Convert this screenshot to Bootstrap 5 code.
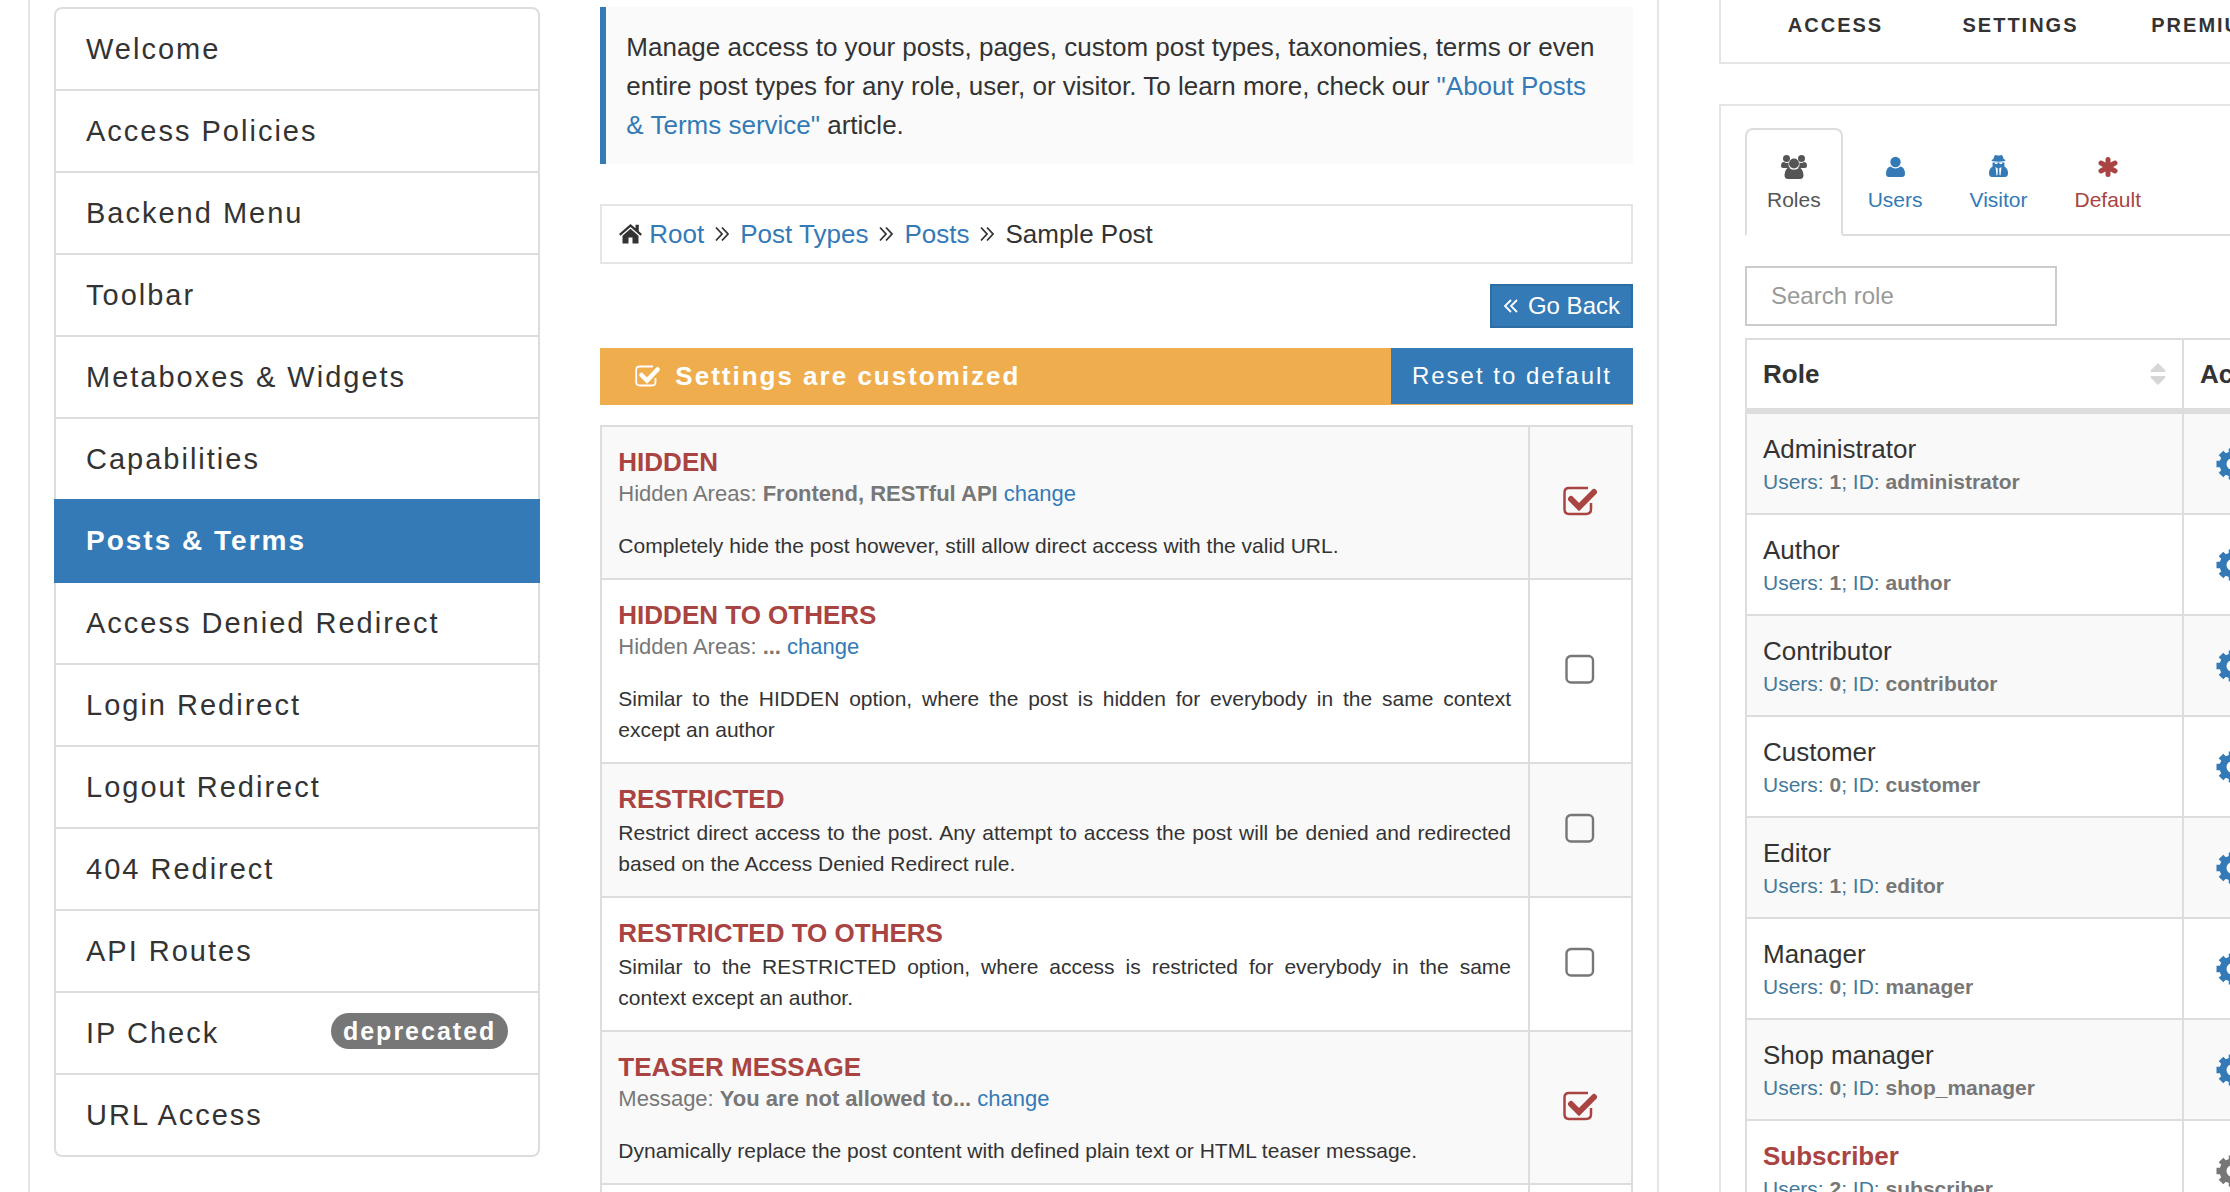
<!DOCTYPE html>
<html lang="en">
<head>
<meta charset="utf-8">
<meta name="viewport" content="width=device-width, initial-scale=1">
<title>Access Manager</title>
<link href="https://cdn.jsdelivr.net/npm/bootstrap@5.3.0/dist/css/bootstrap.min.css" rel="stylesheet">
<style>
body{font-family:"Liberation Sans",Arial,sans-serif;font-size:26px;line-height:36px;color:#333;background:#fff}
a{color:#337ab7;text-decoration:none}
svg{display:block;flex:none}
.page-shell{height:100vh;overflow:hidden;padding-left:28px;gap:60px}
.pane{border:2px solid #e5e5e5;background:#fff}
.main-pane{flex:1 1 0;min-width:0;border-top:0;border-bottom:0;padding:7px 24px 0}
.main-pane>.row{--bs-gutter-x:60px}
.side-wrap{width:511px;overflow:hidden;gap:40px}
.side-wrap>.pane{width:784px}

.feature-list{--bs-list-group-border-width:2px;--bs-list-group-border-color:#ddd;--bs-list-group-border-radius:8px;--bs-list-group-color:#333;--bs-list-group-action-color:#333;--bs-list-group-active-bg:#337ab7;--bs-list-group-active-border-color:#337ab7;--bs-list-group-item-padding-x:30px;--bs-list-group-item-padding-y:20px;font-size:29px;line-height:40px;letter-spacing:2px}
.feature-list .active{font-size:28px;font-weight:700}
.feature-list .badge{font-size:25px;line-height:24px;padding:6px 12px;background:#777;border-radius:18px}

.intro{border-left:6px solid #337ab7;background:#fafafa;padding:21px 32px 19px 20px;line-height:39px;margin:0 0 40px}
.crumbs{border:2px solid #e5e5e5;padding:10px 17px;margin-bottom:20px}
.crumbs .arrows{margin:0 11px}
.crumbs .home-icon{margin-right:7px}
.btn-flat{--bs-btn-color:#fff;--bs-btn-bg:#337ab7;--bs-btn-border-color:#2e6da4;--bs-btn-hover-color:#fff;--bs-btn-hover-bg:#286090;--bs-btn-border-radius:0;--bs-btn-border-width:2px;--bs-btn-font-size:24px;line-height:36px}
.btn-back{padding:2px 11px;gap:10px}
.btn-reset{--bs-btn-border-width:0;padding:10px 21px;letter-spacing:2px}
.notice-bar{background:#f0ad4e;color:#fff;margin:20px 0;padding-bottom:1px;letter-spacing:2px}
.notice-bar .notice-text{padding-left:35px;gap:15px}

.options,.roles{--bs-table-color:#333;--bs-table-striped-color:#333;--bs-table-striped-bg:#f9f9f9;border-color:#ddd;border-collapse:collapse;table-layout:fixed}
.options td,.options th,.roles td,.roles th{border:2px solid #ddd}
.options td{padding:17px 17px 17px 16px}
.options td.pick{width:103px;padding:0 0 8px;text-align:center;vertical-align:middle}
.opt-name{color:#a94442;font-weight:700;line-height:36px;display:block}
.opt-meta{color:#777;font-size:22px;line-height:28px;margin-bottom:22px}
.opt-desc{font-size:21px;line-height:31px;text-align:justify;margin:0}
.tick{appearance:none;display:inline-block;vertical-align:middle;width:34px;height:30px;margin:0;background:no-repeat center url("data:image/svg+xml,%3Csvg xmlns='http://www.w3.org/2000/svg' width='34' height='30'%3E%3Crect x='3.5' y='2' width='26.5' height='26.5' rx='4.5' fill='none' stroke='%23777' stroke-width='2.4'/%3E%3C/svg%3E")}
.tick:checked{background-image:url("data:image/svg+xml,%3Csvg xmlns='http://www.w3.org/2000/svg' width='34' height='30'%3E%3Cpath d='M25 2H6Q1.5 2 1.5 6.500V23Q1.500 28 6 28H23Q28 28 28 23V17' fill='none' stroke='%23a94442' stroke-width='2.5'/%3E%3Cpath d='M8 13L16 21L31 6' fill='none' stroke='%23a94442' stroke-width='6' stroke-linejoin='miter' stroke-linecap='round'/%3E%3C/svg%3E")}

.top-nav{border-top:0!important;padding:0 18px 0 22px;height:64px;flex:none}
.top-nav a{color:#333;font-size:20px;font-weight:700;letter-spacing:2px;line-height:24px;padding:13px 0 25px;text-align:center}
.subject-pane{flex:1 1 auto;padding:22px 24px}
.subject-tabs{--bs-nav-tabs-border-width:2px;--bs-nav-tabs-border-color:#ddd;--bs-nav-tabs-border-radius:8px;--bs-nav-tabs-link-active-color:#555;--bs-nav-tabs-link-active-border-color:#ddd #ddd #fff;--bs-nav-link-color:#337ab7;--bs-nav-link-padding-x:20px;gap:3px;font-size:21px;line-height:30px}
.subject-tabs .nav-link{display:flex;flex-direction:column;align-items:center;gap:5px;padding-top:24px;padding-bottom:19px}
.subject-tabs .nav-link.is-default{color:#a94442}
.search-box{width:312px;height:60px;border:2px solid #ccc;border-radius:0;font-size:24px;padding:0 24px;margin:30px 0 12px;color:#555}
.search-box::placeholder{color:#999}
.roles th{padding:16px;line-height:36px;border-bottom:6px solid #ddd}
.roles td{padding:17px 16px 16px}
.roles .role-col{width:437px}
.role-name{line-height:36px;display:block}
.role-name.current{color:#a94442;font-weight:700}
.role-meta{font-size:21px;line-height:30px;color:#44799b;display:block}
.role-meta b{color:#777}
.roles td.acts{padding:14px 16px 18px 32px;vertical-align:middle}
.acts .gear-btn{--bs-btn-color:#337ab7;--bs-btn-padding-x:0;--bs-btn-padding-y:0;--bs-btn-border-width:0}
.acts .gear-off{--bs-btn-color:#777}
</style>
</head>
<body class="overflow-hidden">
<svg width="0" height="0" class="position-absolute" aria-hidden="true">
  <symbol id="gear" viewBox="0 0 32 32">
    <circle cx="16" cy="16" r="9" fill="none" stroke="currentColor" stroke-width="7"/>
    <g stroke="currentColor" stroke-width="6.500"><path d="M16 .5v7M16 24.500v7M.5 16h7M24.500 16h7M5 5l5 5M22 22l5 5M5 27l5-5M22 10l5-5"/></g>
  </symbol>
</svg>
<div class="page-shell d-flex">
  <main class="pane main-pane">
    <div class="row">
      <div class="col-4">
        <nav class="list-group feature-list" aria-label="Services">
          <a href="#" class="list-group-item list-group-item-action">Welcome</a>
          <a href="#" class="list-group-item list-group-item-action">Access Policies</a>
          <a href="#" class="list-group-item list-group-item-action">Backend Menu</a>
          <a href="#" class="list-group-item list-group-item-action">Toolbar</a>
          <a href="#" class="list-group-item list-group-item-action">Metaboxes &amp; Widgets</a>
          <a href="#" class="list-group-item list-group-item-action">Capabilities</a>
          <a href="#" class="list-group-item list-group-item-action active" aria-current="page">Posts &amp; Terms</a>
          <a href="#" class="list-group-item list-group-item-action">Access Denied Redirect</a>
          <a href="#" class="list-group-item list-group-item-action">Login Redirect</a>
          <a href="#" class="list-group-item list-group-item-action">Logout Redirect</a>
          <a href="#" class="list-group-item list-group-item-action">404 Redirect</a>
          <a href="#" class="list-group-item list-group-item-action">API Routes</a>
          <a href="#" class="list-group-item list-group-item-action d-flex justify-content-between align-items-start">IP Check <span class="badge">deprecated</span></a>
          <a href="#" class="list-group-item list-group-item-action">URL Access</a>
        </nav>
      </div>
      <div class="col-8">
        <p class="intro">Manage access to your posts, pages, custom post types, taxonomies, terms or even entire post types for any role, user, or visitor. To learn more, check our <a href="#">"About Posts &amp; Terms service"</a> article.</p>
        <nav class="crumbs d-flex align-items-center" aria-label="Breadcrumb">
          <svg class="home-icon" width="23" height="20" viewBox="0 0 23 20" fill="#333"><path d="M11.500 0L0 10l1.500 1.700L11.500 3l10 8.700L23 10l-3.200-2.800V.8h-3.300v3.500z"/><path d="M3.500 11.800V19.500H9.500V13.500h4V19.500h6V11.800l-8-7z"/></svg>
          <a href="#">Root</a>
          <svg class="arrows" width="14" height="16" viewBox="0 0 14 16" fill="none" stroke="#333" stroke-width="1.800"><path d="M1 1.500L7 8l-6 6.500M7 1.500L13 8l-6 6.500"/></svg>
          <a href="#">Post Types</a>
          <svg class="arrows" width="14" height="16" viewBox="0 0 14 16" fill="none" stroke="#333" stroke-width="1.800"><path d="M1 1.500L7 8l-6 6.500M7 1.500L13 8l-6 6.500"/></svg>
          <a href="#">Posts</a>
          <svg class="arrows" width="14" height="16" viewBox="0 0 14 16" fill="none" stroke="#333" stroke-width="1.800"><path d="M1 1.500L7 8l-6 6.500M7 1.500L13 8l-6 6.500"/></svg>
          <span>Sample Post</span>
        </nav>
        <div class="d-flex justify-content-end">
          <button type="button" class="btn btn-flat btn-back d-flex align-items-center">
            <svg width="15" height="14" viewBox="0 0 15 14" fill="none" stroke="#fff" stroke-width="1.800"><path d="M8 1L2 7l6 6M14 1L8 7l6 6"/></svg>Go Back
          </button>
        </div>
        <div class="notice-bar d-flex justify-content-between">
          <strong class="notice-text d-flex align-items-center">
            <svg width="25" height="22" viewBox="0 0 25 22" fill="none" stroke="#fff"><path d="M18 1.500H5Q1.200 1.500 1.200 5V17Q1.200 20.500 5 20.500H17Q20.500 20.500 20.500 17V13" stroke-width="1.800"/><path d="M6.500 10L12 15.500L22.500 4.500" stroke-width="4.500" stroke-linecap="round"/></svg>
            Settings are customized
          </strong>
          <button type="button" class="btn btn-flat btn-reset">Reset to default</button>
        </div>
        <table class="table table-striped options mb-0">
          <colgroup><col><col style="width:103px"></colgroup>
          <tbody>
            <tr>
              <td><label class="opt-name" for="o1">HIDDEN</label><div class="opt-meta">Hidden Areas: <b>Frontend, RESTful API</b> <a href="#">change</a></div><p class="opt-desc">Completely hide the post however, still allow direct access with the valid URL.</p></td>
              <td class="pick"><input type="checkbox" class="tick" id="o1" checked></td>
            </tr>
            <tr>
              <td><label class="opt-name" for="o2">HIDDEN TO OTHERS</label><div class="opt-meta">Hidden Areas: <b>...</b> <a href="#">change</a></div><p class="opt-desc">Similar to the HIDDEN option, where the post is hidden for everybody in the same context except an author</p></td>
              <td class="pick"><input type="checkbox" class="tick" id="o2"></td>
            </tr>
            <tr>
              <td><label class="opt-name" for="o3">RESTRICTED</label><p class="opt-desc">Restrict direct access to the post. Any attempt to access the post will be denied and redirected based on the Access Denied Redirect rule.</p></td>
              <td class="pick"><input type="checkbox" class="tick" id="o3"></td>
            </tr>
            <tr>
              <td><label class="opt-name" for="o4">RESTRICTED TO OTHERS</label><p class="opt-desc">Similar to the RESTRICTED option, where access is restricted for everybody in the same context except an author.</p></td>
              <td class="pick"><input type="checkbox" class="tick" id="o4"></td>
            </tr>
            <tr>
              <td><label class="opt-name" for="o5">TEASER MESSAGE</label><div class="opt-meta">Message: <b>You are not allowed to...</b> <a href="#">change</a></div><p class="opt-desc">Dynamically replace the post content with defined plain text or HTML teaser message.</p></td>
              <td class="pick"><input type="checkbox" class="tick" id="o5" checked></td>
            </tr>
            <tr><td></td><td class="pick"></td></tr>
          </tbody>
        </table>
      </div>
    </div>
  </main>

  <aside class="side-wrap d-flex flex-column">
    <nav class="pane top-nav row g-0 row-cols-4" aria-label="Sections">
      <a class="col" href="#">ACCESS</a>
      <a class="col" href="#">SETTINGS</a>
      <a class="col" href="#">PREMIUM</a>
    </nav>
    <section class="pane subject-pane">
      <div class="nav nav-tabs subject-tabs" role="tablist">
        <button class="nav-link active" type="button" role="tab" aria-selected="true">
          <svg width="26" height="26" viewBox="0 0 26 26" fill="#555"><circle cx="5.500" cy="4.500" r="3.500"/><circle cx="20.500" cy="4.500" r="3.500"/><path d="M0 12Q0 8 3 8Q5.500 9.500 7.500 8.500Q7 12 9 14H3Q0 14.500 0 12zM26 12Q26 8 23 8Q20.500 9.500 18.500 8.500Q19 12 17 14H23Q26 14.500 26 12z"/><circle cx="13" cy="9.500" r="5"/><path d="M7.500 13.500Q13 18 18.500 13.500Q22 15 22.500 21Q22.500 25 19 25H7Q3.500 25 3.500 21Q4 15 7.500 13.500z"/></svg>
          Roles</button>
        <button class="nav-link" type="button" role="tab">
          <svg width="19" height="26" viewBox="0 0 19 26" fill="#337ab7"><circle cx="9.500" cy="8" r="5.200"/><path d="M4.500 12.500Q9.500 16.500 14.500 12.500Q18.500 13 19 19.500Q19 23 16 23H3Q0 23 0 19.500Q.5 13 4.500 12.500z"/></svg>
          Users</button>
        <button class="nav-link" type="button" role="tab">
          <svg width="19" height="26" viewBox="0 0 19 26" fill="#337ab7"><path d="M4.500 5Q5 1 7 1Q9.500 2.200 12 1Q14 1 14.500 5L16.500 6Q17 7.500 9.500 7.800Q2 7.500 2.500 6zM3.500 8.500H15.500V11Q15 12 15.500 12.500Q19 14.500 19 19Q19 23 16 23H3Q0 23 0 19Q0 14.500 3.500 12.500Q4 12 3.500 11z"/><path d="M5.500 8.500H8.800L8.300 10H6.200zM10.200 8.500H13.500L12.800 10H10.700zM6.500 13L8.800 14.500L8.500 21L7.500 21.500zM12.500 13L10.200 14.500L10.500 21L11.500 21.500z" fill="#fff"/></svg>
          Visitor</button>
        <button class="nav-link is-default" type="button" role="tab">
          <svg width="20" height="26" viewBox="0 0 20 26" stroke="#a94442" stroke-width="5" stroke-linecap="round"><path d="M10 5.500v15M3 9l14 8M3 17l14-8"/></svg>
          Default</button>
      </div>
      <input type="text" class="form-control search-box" placeholder="Search role" aria-label="Search role">
      <table class="table table-striped roles mb-0">
        <colgroup><col class="role-col"><col></colgroup>
        <thead><tr>
          <th><div class="d-flex justify-content-between align-items-center">Role
            <svg width="16" height="22" viewBox="0 0 16 22" fill="#d6d6d6"><path d="M8 0l7.500 7.500q0 1.500-1 1.500h-13q-1 0-1-1.500zM8 22l7.500-7.500q0-1.500-1-1.500h-13q-1 0-1 1.500z"/></svg></div></th>
          <th>Action</th>
        </tr></thead>
        <tbody>
          <tr><td><span class="role-name">Administrator</span><span class="role-meta">Users: <b>1</b>; ID: <b>administrator</b></span></td><td class="acts"><button type="button" class="btn gear-btn" aria-label="Manage"><svg width="32" height="32"><use href="#gear"/></svg></button></td></tr>
          <tr><td><span class="role-name">Author</span><span class="role-meta">Users: <b>1</b>; ID: <b>author</b></span></td><td class="acts"><button type="button" class="btn gear-btn" aria-label="Manage"><svg width="32" height="32"><use href="#gear"/></svg></button></td></tr>
          <tr><td><span class="role-name">Contributor</span><span class="role-meta">Users: <b>0</b>; ID: <b>contributor</b></span></td><td class="acts"><button type="button" class="btn gear-btn" aria-label="Manage"><svg width="32" height="32"><use href="#gear"/></svg></button></td></tr>
          <tr><td><span class="role-name">Customer</span><span class="role-meta">Users: <b>0</b>; ID: <b>customer</b></span></td><td class="acts"><button type="button" class="btn gear-btn" aria-label="Manage"><svg width="32" height="32"><use href="#gear"/></svg></button></td></tr>
          <tr><td><span class="role-name">Editor</span><span class="role-meta">Users: <b>1</b>; ID: <b>editor</b></span></td><td class="acts"><button type="button" class="btn gear-btn" aria-label="Manage"><svg width="32" height="32"><use href="#gear"/></svg></button></td></tr>
          <tr><td><span class="role-name">Manager</span><span class="role-meta">Users: <b>0</b>; ID: <b>manager</b></span></td><td class="acts"><button type="button" class="btn gear-btn" aria-label="Manage"><svg width="32" height="32"><use href="#gear"/></svg></button></td></tr>
          <tr><td><span class="role-name">Shop manager</span><span class="role-meta">Users: <b>0</b>; ID: <b>shop_manager</b></span></td><td class="acts"><button type="button" class="btn gear-btn" aria-label="Manage"><svg width="32" height="32"><use href="#gear"/></svg></button></td></tr>
          <tr><td><span class="role-name current">Subscriber</span><span class="role-meta">Users: <b>2</b>; ID: <b>subscriber</b></span></td><td class="acts"><button type="button" class="btn gear-btn gear-off" aria-label="Manage"><svg width="32" height="32"><use href="#gear"/></svg></button></td></tr>
        </tbody>
      </table>
    </section>
  </aside>
</div>
<script src="https://cdn.jsdelivr.net/npm/bootstrap@5.3.0/dist/js/bootstrap.bundle.min.js"></script>
</body>
</html>
